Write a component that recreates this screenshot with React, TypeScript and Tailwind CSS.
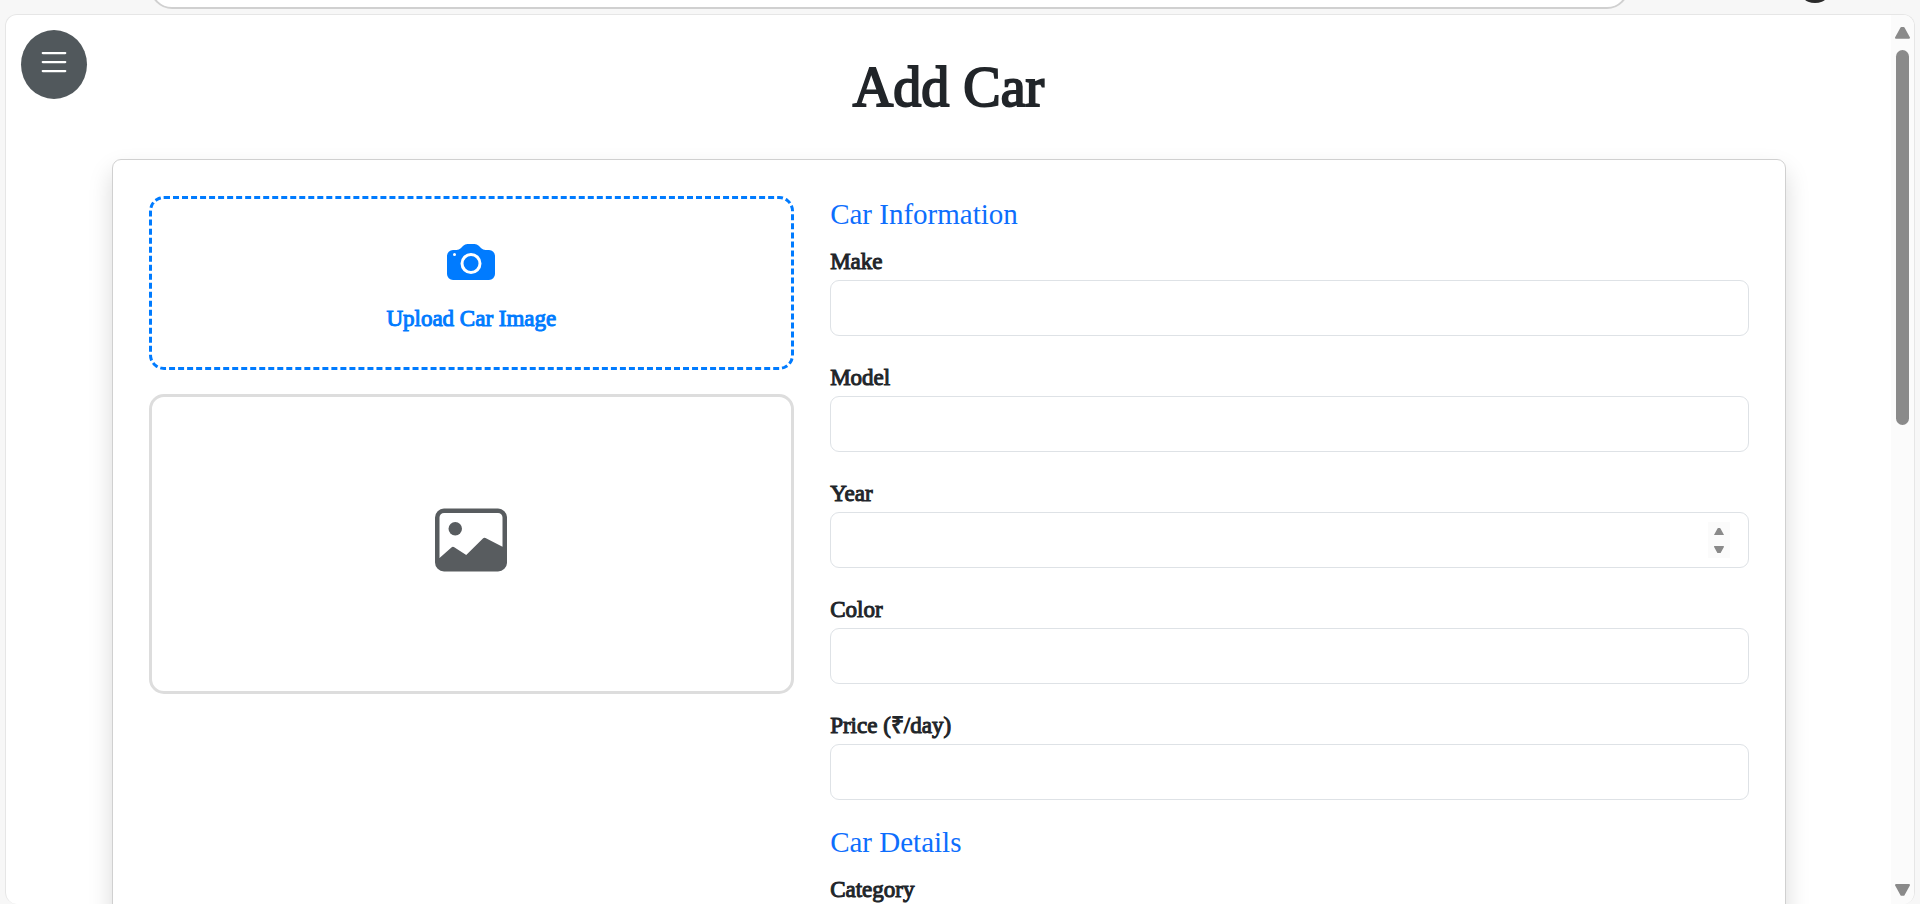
import { BsCameraFill, BsImage, BsList } from "react-icons/bs";

type FieldProps = { id: string; label: string; type?: "text" | "number" };

function Triangle({ down = false, className }: { down?: boolean; className: string }) {
  return (
    <svg viewBox="0 0 14 11" className={className} fill="#8a8a8a" stroke="#8a8a8a" strokeWidth="2" strokeLinejoin="round" aria-hidden="true">
      <path d={down ? "M1 1h12L8 10H6z" : "M1 10h12L8 1H6z"} />
    </svg>
  );
}

function Field({ id, label, type = "text" }: FieldProps) {
  return (
    <div className="mb-6">
      <label htmlFor={id} className="block text-[23px] leading-9 text-[#212529] [-webkit-text-stroke:1px_#212529]">
        {label}
      </label>
      <div className="relative">
        <input
          id={id}
          type={type}
          className="block h-14 w-full rounded-[9px] border border-[#dee2e6] bg-white px-[18px] text-[23px] outline-none [appearance:textfield] focus:border-[#86b7fe] [&::-webkit-inner-spin-button]:appearance-none"
        />
        {type === "number" && (
          <div className="absolute inset-y-[10px] right-[19px] flex w-[22px] flex-col bg-[#fbfbfb]">
            <button type="button" aria-label={`Increase ${label}`} className="flex flex-1 items-center justify-center pt-px">
              <Triangle className="w-[10px]" />
            </button>
            <button type="button" aria-label={`Decrease ${label}`} className="flex flex-1 items-center justify-center pt-px">
              <Triangle down className="w-[10px]" />
            </button>
          </div>
        )}
      </div>
    </div>
  );
}

function SectionTitle({ children }: { children: string }) {
  return <h2 className="mb-3 text-[29px] leading-9 text-[#0d6efd]">{children}</h2>;
}

function BrowserBar() {
  return (
    <header className="flex h-[14px] shrink-0 items-end overflow-hidden pr-[87px] pb-[5px] pl-[150px]">
      <div className="mr-[168px] h-11 flex-1 rounded-full border-2 border-[#d0d0d0] bg-white" />
      <div className="mb-[6px] size-9 shrink-0 rounded-full bg-[#2b2b2b]" />
    </header>
  );
}

function ScrollBar() {
  return (
    <div className="flex w-[23px] shrink-0 flex-col items-center bg-[#fbfbfb] pt-3 pb-2">
      <Triangle className="w-[15px]" />
      <div className="mt-[11px] flex w-[13px] flex-1 flex-col">
        <div className="h-[45%] rounded-full bg-[#8a8a8a]" />
      </div>
      <Triangle down className="w-[15px]" />
    </div>
  );
}

export default function App() {
  return (
    <div className="flex h-screen flex-col overflow-hidden bg-[#f7f7f7] font-['Liberation_Serif',serif] text-[#212529]">
      <BrowserBar />
      <div className="mx-[5px] flex min-h-0 flex-1 overflow-hidden rounded-xl border border-b-0 border-[#e6e6e6] bg-white">
        <main className="relative min-w-0 flex-1 overflow-hidden">
          <button
            type="button"
            aria-label="Open menu"
            className="absolute top-[15px] left-[15px] rounded-[50%] bg-[#51585c] px-[15px] pt-[14px] pb-[19px] text-white"
          >
            <BsList className="size-9" />
          </button>

          <div className="mx-auto max-w-[1710px] px-[18px] pt-9">
            <h1 className="mb-9 text-center text-[56px] leading-[72px] [-webkit-text-stroke:2px_#212529]">Add Car</h1>

            <form className="grid grid-cols-12 gap-9 rounded-[9px] border border-[#d0d0d0] bg-white p-9 shadow-[0_12px_24px_rgba(0,0,0,0.15)]">
              <div className="col-span-5">
                <label
                  htmlFor="car-image"
                  className="flex cursor-pointer flex-col items-center rounded-[15px] border-[3px] border-dashed border-[#007bff] py-[30px] text-[#007bff]"
                >
                  <span className="mb-[6px] flex h-[66px] items-center">
                    <BsCameraFill className="size-12" />
                  </span>
                  <span className="text-[23px] leading-9 [-webkit-text-stroke:1px_#007bff]">Upload Car Image</span>
                  <input id="car-image" type="file" accept="image/*" className="sr-only" />
                </label>
                <div className="mt-6 flex h-[300px] items-center justify-center rounded-[15px] border-[3px] border-[#dddddd] pb-2 text-[#585c5f]">
                  <BsImage className="size-[72px]" />
                </div>
              </div>

              <div className="col-span-7">
                <SectionTitle>Car Information</SectionTitle>
                <Field id="make" label="Make" />
                <Field id="model" label="Model" />
                <Field id="year" label="Year" type="number" />
                <Field id="color" label="Color" />
                <Field id="price" label="Price (₹/day)" />
                <SectionTitle>Car Details</SectionTitle>
                <Field id="category" label="Category" />
              </div>
            </form>
          </div>
        </main>
        <ScrollBar />
      </div>
    </div>
  );
}
